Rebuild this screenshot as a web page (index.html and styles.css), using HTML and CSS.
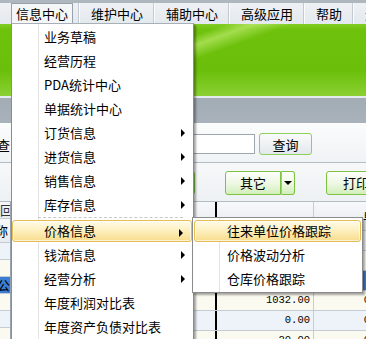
FILE: index.html
```html
<!DOCTYPE html>
<html lang="zh-CN">
<head>
  <meta charset="UTF-8">
  <meta name="viewport" content="width=device-width, initial-scale=1.0">
  <title>信息中心</title>
  <link rel="stylesheet" href="styles.css">
</head>
<body>
  <div class="app">
    <div class="menubar">
      <div class="menubar-item"><span class="label active">信息中心</span></div>
      <div class="menubar-item"><span class="label">维护中心</span></div>
      <div class="menubar-item"><span class="label">辅助中心</span></div>
      <div class="menubar-item"><span class="label">高级应用</span></div>
      <div class="menubar-item"><span class="label">帮助</span></div>
      <div class="menubar-item"><span class="label">退出</span></div>
    </div>

    <div class="banner"></div>
    <div class="strip"></div>

    <div class="search">
      <div class="search-label"><span>模糊查</span></div>
      <input class="search-input" type="text">
      <button class="btn btn-gray">查询</button>
    </div>

    <div class="toolbar">
      <button class="btn btn-green btn-new">新增</button>
      <div class="split">
        <button class="btn btn-green split-main">其它</button>
        <button class="btn btn-green split-arrow"><span class="caret"></span></button>
      </div>
      <button class="btn btn-green btn-print">打印</button>
    </div>

    <div class="panes">
      <div class="leftlist">
        <div class="lrow lhead1"><span>回</span></div>
        <div class="lrow lhead2"><span>名称</span></div>
        <div class="lrow blue"><span></span></div>
        <div class="lrow cream"><span></span></div>
        <div class="lrow selected"><span>公</span></div>
        <div class="lrow cream"><span></span></div>
        <div class="lrow blue"><span></span></div>
        <div class="lrow cream"><span></span></div>
      </div>

      <div class="grid">
        <div class="grow ghead">
          <div class="col-a"></div>
          <div class="col-b"></div>
          <div class="col-c">单位</div>
        </div>
        <div class="grow blue">
          <div class="col-a"></div>
          <div class="col-b"></div>
          <div class="col-c">三</div>
        </div>
        <div class="grow cream">
          <div class="col-a"></div>
          <div class="col-b"></div>
          <div class="col-c">中</div>
        </div>
        <div class="grow selected">
          <div class="col-a"></div>
          <div class="col-b"></div>
          <div class="col-c"></div>
        </div>
        <div class="grow cream">
          <div class="col-a"></div>
          <div class="col-b">1032.00</div>
          <div class="col-c">0.00</div>
        </div>
        <div class="grow blue">
          <div class="col-a"></div>
          <div class="col-b">0.00</div>
          <div class="col-c">0.00</div>
        </div>
        <div class="grow cream">
          <div class="col-a"></div>
          <div class="col-b">20.00</div>
          <div class="col-c">0.00</div>
        </div>
      </div>
    </div>
  </div>

  <!-- 下拉菜单 -->
  <div class="menu">
    <div class="menu-item">业务草稿</div>
    <div class="menu-item">经营历程</div>
    <div class="menu-item">PDA统计中心</div>
    <div class="menu-item">单据统计中心</div>
    <div class="menu-item has-sub">订货信息</div>
    <div class="menu-item has-sub">进货信息</div>
    <div class="menu-item has-sub">销售信息</div>
    <div class="menu-item has-sub">库存信息</div>
    <div class="menu-sep"></div>
    <div class="menu-item has-sub hover">价格信息</div>
    <div class="menu-item has-sub">钱流信息</div>
    <div class="menu-item has-sub">经营分析</div>
    <div class="menu-item">年度利润对比表</div>
    <div class="menu-item">年度资产负债对比表</div>
  </div>

  <div class="submenu">
    <div class="menu-item hover">往来单位价格跟踪</div>
    <div class="menu-item">价格波动分析</div>
    <div class="menu-item">仓库价格跟踪</div>
  </div>
</body>
</html>
```

FILE: styles.css
```css
:root {
  --menu-border: #8c8c8c;
  --grid-line: #c6ccd4;
  --row-cream: #fbfaf0;
  --row-blue: #eef2f9;
  --row-selected: #3b7ed3;
  --green-border: #7dc243;
}

* {
  box-sizing: border-box;
}

html, body {
  margin: 0;
  padding: 0;
  overflow: hidden;
}

body {
  font-family: "Noto Sans CJK SC", "Noto Sans", sans-serif;
  font-size: 13px;
  color: #000;
  background: #fff;
}

.app {
  width: 366px;
  height: 339px;
  overflow: hidden;
}

/* 顶部菜单栏 */
.menubar {
  height: 24px;
  display: flex;
  padding-left: 3px;
  padding-top: 3px;
  background: linear-gradient(#aeb6be 0, #aeb6be 3px, #eef1f4 3px, #e4e9ee 100%);
  white-space: nowrap;
  overflow: hidden;
}

.menubar-item {
  flex-shrink: 0;
  padding: 0 5px 0 7px;
  border-right: 1px solid #c3cad1;
  box-shadow: 1px 0 0 #fafbfc;
}

.menubar-item .label {
  display: block;
  height: 20px;
  line-height: 19px;
  padding: 0 4px;
  border: 1px solid transparent;
  border-bottom: none;
}

.menubar-item:first-child {
  padding-left: 8px;
}

.menubar-item .label.active {
  border-color: #98a2ac;
  background: #f4f6f8;
}

/* 绿色横幅 */
.banner {
  height: 74px;
  background:
    linear-gradient(160deg, transparent 0, transparent 40%, rgba(230, 255, 160, 0.45) 45%, transparent 52%),
    linear-gradient(#82cc24 0, #6ec20c 8%, #6bbf0a 65%, #8bd033 100%);
  border-bottom: 2px solid #e4ebee;
}

.strip {
  height: 25px;
  background: linear-gradient(#a2acb4, #a9b2ba);
}

/* 查询栏 */
.search {
  height: 40px;
  display: flex;
  align-items: center;
  padding-top: 3px;
  background: linear-gradient(#fbfcfc, #f0f3f5);
  border-bottom: 1px solid #b3bbc3;
}

.search-label {
  width: 11px;
  flex-shrink: 0;
  overflow: hidden;
  display: flex;
  justify-content: flex-end;
  white-space: nowrap;
}

.search-label span {
  flex-shrink: 0;
  padding-right: 1px;
}

.search-input {
  flex-shrink: 0;
  margin-left: 109px;
  width: 135px;
  height: 20px;
  border: 1px solid #9ea6ad;
  background: #fff;
  padding: 0;
}

.btn {
  flex-shrink: 0;
  font-family: inherit;
  font-size: 13px;
  color: #000;
  padding: 0;
  cursor: pointer;
}

.btn-gray {
  margin-left: 4px;
  width: 53px;
  height: 22px;
  border: 1px solid #8fcf5b;
  border-radius: 3px;
  background: linear-gradient(#fafbfb, #e3e8eb);
}

/* 工具栏 */
.toolbar {
  height: 39px;
  display: flex;
  align-items: center;
  padding-left: 140px;
  padding-top: 1px;
  background: linear-gradient(#f6f8f9, #eef1f4);
  border-bottom: 1px solid #b3bbc3;
}

.btn-green {
  height: 24px;
  border: 1px solid var(--green-border);
  border-radius: 3px;
  background: linear-gradient(#fdfefc, #eef8e4 50%, #d3eeba);
}

.btn-new {
  width: 55px;
}

.split {
  flex-shrink: 0;
  display: flex;
  margin-left: 30px;
}

.split-main {
  width: 56px;
  border-radius: 3px 0 0 3px;
}

.split-arrow {
  width: 14px;
  border-left-color: #9bd26a;
  border-radius: 0 3px 3px 0;
  display: flex;
  align-items: center;
  justify-content: center;
}

.caret {
  width: 0;
  height: 0;
  border-left: 4px solid transparent;
  border-right: 4px solid transparent;
  border-top: 4px solid #000;
}

.btn-print {
  margin-left: 31px;
  width: 60px;
}

/* 表格区域 */
.panes {
  display: flex;
}

.leftlist {
  width: 11px;
  flex-shrink: 0;
  border-right: 1px solid #9aa4ae;
  overflow: hidden;
}

.lrow {
  height: 17px;
  display: flex;
  align-items: center;
  justify-content: flex-end;
  border-bottom: 1px solid var(--grid-line);
  white-space: nowrap;
  line-height: 16px;
}

.lrow span {
  flex-shrink: 0;
}

.lhead1 {
  background: linear-gradient(#f6f7f9, #e7ebef);
  padding-right: 0;
}

.lhead1 span {
  margin-right: -3px;
  color: #333;
}

.lhead2 {
  height: 24px;
  background: linear-gradient(#f6f7f9, #e7ebef);
  padding-right: 2px;
}

.lrow.selected {
  background: var(--row-selected);
}

.lrow.cream {
  background: var(--row-cream);
}

.lrow.blue {
  background: var(--row-blue);
}

.grid {
  flex: 1;
  overflow: hidden;
}

.grow {
  display: flex;
  height: 20px;
  border-bottom: 1px solid var(--grid-line);
  font-family: "Liberation Mono", monospace;
  font-size: 10.5px;
  line-height: 19px;
}

.grow.ghead {
  height: 29px;
  background: linear-gradient(#f7f8fa, #e5e9ee);
  font-family: "Noto Sans CJK SC", sans-serif;
  font-size: 13px;
  line-height: 28px;
}

.grow.cream {
  background: var(--row-cream);
}

.grow.blue {
  background: var(--row-blue);
}

.grow.selected {
  background: var(--row-selected);
  color: #fff;
}

.col-a {
  width: 204px;
  flex-shrink: 0;
}

.col-b {
  width: 99px;
  flex-shrink: 0;
  border-left: 2px solid #000;
  border-right: 1px solid var(--grid-line);
  text-align: right;
  padding-right: 3px;
}

.col-c {
  width: 78px;
  flex-shrink: 0;
  text-align: right;
  padding-right: 3px;
  white-space: nowrap;
}

/* 下拉菜单 */
.menu,
.submenu {
  position: absolute;
  background: linear-gradient(90deg, #fff 26px, #e3e3e3 26px, #e3e3e3 27px, #fff 27px);
  border: 1px solid var(--menu-border);
  box-shadow: 2px 2px 2px rgba(0, 0, 0, 0.35);
  padding: 1px 0;
  white-space: nowrap;
}

.menu {
  left: 11px;
  top: 23px;
  width: 183px;
  height: 330px;
  border-top-color: #a8b0b8;
}

.submenu {
  left: 192px;
  top: 217px;
  width: 171px;
  height: 76px;
}

.menu-item {
  position: relative;
  height: 24px;
  line-height: 24px;
  padding-left: 32px;
}

.submenu .menu-item {
  padding-left: 34px;
}

.menu-item.has-sub::after {
  content: "";
  position: absolute;
  right: 8px;
  top: 8px;
  border-top: 4px solid transparent;
  border-bottom: 4px solid transparent;
  border-left: 4px solid #000;
}

.menu-item.hover {
  height: 22px;
  line-height: 20px;
  margin: 1px 1px 1px 0;
  padding-left: 31px;
  border: 1px solid #e4bd58;
  border-radius: 3px;
  background: linear-gradient(#fffbe6, #fdf0c2 45%, #f8dc8c);
  box-shadow: inset 0 0 0 1px rgba(255, 255, 255, 0.6);
}

.submenu .menu-item.hover {
  margin: 1px;
  padding-left: 32px;
}

.menu-sep {
  height: 2px;
  margin-left: 26px;
  margin-right: 10px;
  border-top: 1px dashed #c8c8c8;
}
```
